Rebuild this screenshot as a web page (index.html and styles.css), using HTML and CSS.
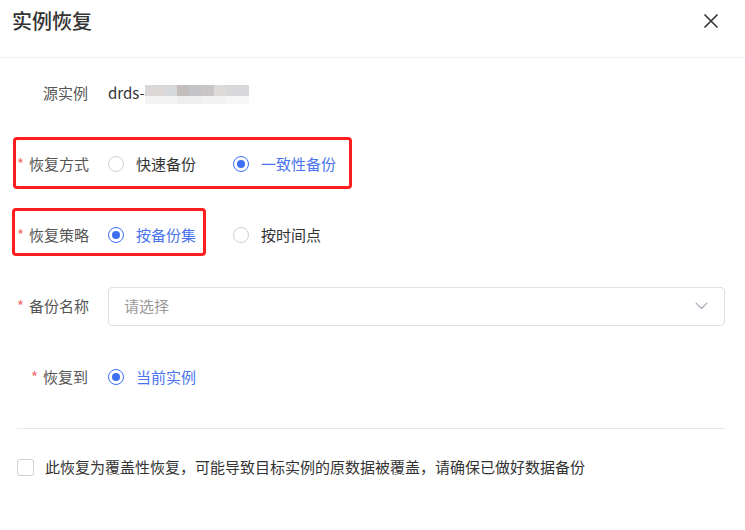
FILE: index.html
```html
<!DOCTYPE html>
<html lang="zh-CN">

<head>
    <meta charset="UTF-8">
    <meta name="viewport" content="width=device-width, initial-scale=1.0">
    <title>实例恢复</title>
    <link rel="stylesheet" href="styles.css">
</head>

<body>
    <div class="dialog">
        <div class="dialog-header">
            <h1 class="dialog-title">实例恢复</h1>
            <span class="close-btn">
                <svg width="16" height="16" viewBox="0 0 16 16">
                    <path d="M1.5 1.5 L14.5 14.5 M14.5 1.5 L1.5 14.5" stroke="#333" stroke-width="1.6" fill="none"/>
                </svg>
            </span>
        </div>

        <div class="dialog-body">
            <div class="form-row">
                <label class="form-label">源实例</label>
                <div class="form-content">
                    <span class="value-text">drds-</span><span class="mask"></span>
                </div>
            </div>

            <div class="form-row">
                <span class="mark mark-mode"></span>
                <label class="form-label"><i class="req">*</i>恢复方式</label>
                <div class="form-content">
                    <span class="radio-item"><span class="radio"></span>快速备份</span>
                    <span class="radio-item checked"><span class="radio"></span>一致性备份</span>
                </div>
            </div>

            <div class="form-row">
                <span class="mark mark-policy"></span>
                <label class="form-label"><i class="req">*</i>恢复策略</label>
                <div class="form-content">
                    <span class="radio-item checked"><span class="radio"></span>按备份集</span>
                    <span class="radio-item"><span class="radio"></span>按时间点</span>
                </div>
            </div>

            <div class="form-row">
                <label class="form-label"><i class="req">*</i>备份名称</label>
                <div class="form-content">
                    <div class="select">
                        <span class="placeholder">请选择</span>
                        <svg width="13" height="8" viewBox="0 0 13 8">
                            <path d="M0.8 0.8 L6.5 6.5 L12.2 0.8" stroke="#a0a4ad" stroke-width="1.1" fill="none"/>
                        </svg>
                    </div>
                </div>
            </div>

            <div class="form-row">
                <label class="form-label"><i class="req">*</i>恢复到</label>
                <div class="form-content">
                    <span class="radio-item checked"><span class="radio"></span>当前实例</span>
                </div>
            </div>

            <div class="divider"></div>

            <div class="confirm">
                <span class="checkbox"></span>
                <span>此恢复为覆盖性恢复，可能导致目标实例的原数据被覆盖，请确保已做好数据备份</span>
            </div>
        </div>
    </div>
</body>

</html>
```

FILE: styles.css
```css
body {
    margin: 0;
    background-color: #fff;
    font-family: "Noto Sans CJK SC", "Liberation Sans", sans-serif;
    color: #333;
}

.dialog {
    width: 745px;
}

.dialog-header {
    height: 57px;
    border-bottom: 1px solid #f0f0f2;
    display: flex;
    align-items: center;
    justify-content: space-between;
    padding: 0 26px 0 12px;
}

.dialog-title {
    margin: 0;
    font-size: 20px;
    font-weight: 500;
    color: #333;
    line-height: 1;
    margin-top: -15px;
}

.close-btn {
    display: flex;
    margin-top: -15px;
}

.dialog-body {
    padding: 15px 20px 0 17px;
}

.form-row {
    position: relative;
    display: flex;
    align-items: center;
    height: 40px;
    margin-bottom: 31px;
    font-size: 15px;
    line-height: 20px;
}

.form-label {
    width: 71px;
    flex-shrink: 0;
    text-align: right;
    white-space: nowrap;
    color: #555;
    margin-right: 20px;
}

.req {
    font-style: normal;
    color: #f56c6c;
    margin-right: 5px;
}

.form-content {
    flex: 1;
    display: flex;
    align-items: center;
}

.value-text {
    color: #333;
}

.mask {
    display: inline-block;
    width: 104px;
    height: 19px;
    margin-top: 3px;
    background:
        linear-gradient(to right, #dcd8d8 0 20px, #d6d8dc 20px 32px, #c4bebc 32px 44px, #c4c4c8 44px 56px, #c8c6c6 56px 69px, #dedada 69px 81px, #d8d8da 81px) top / 100% 11px no-repeat,
        linear-gradient(to right, #f4f4f4 0 32px, #eeeeee 32px 56px, #f2f2f2 56px 81px, #f6f6f6 81px) bottom / 100% 8px no-repeat;
}

.radio-item {
    display: inline-flex;
    align-items: center;
    color: #333;
    margin-right: 37px;
}

.radio {
    width: 16px;
    height: 16px;
    box-sizing: border-box;
    border: 1px solid #cfd1d6;
    border-radius: 50%;
    margin-right: 12px;
    display: inline-flex;
    align-items: center;
    justify-content: center;
}

.radio-item.checked {
    color: #4a74ee;
}

.radio-item.checked .radio {
    border: 1.5px solid #3d6ef3;
}

.radio-item.checked .radio::after {
    content: "";
    width: 8px;
    height: 8px;
    border-radius: 50%;
    background-color: #3d6ef3;
}

.mark {
    position: absolute;
    border: 3px solid #ff1d1d;
    border-radius: 4px;
    box-sizing: border-box;
}

.mark-mode {
    left: -4px;
    top: -7px;
    width: 339px;
    height: 52px;
}

.mark-policy {
    left: -5px;
    top: -7px;
    width: 194px;
    height: 48px;
}

.select {
    flex: 1;
    height: 39px;
    box-sizing: border-box;
    border: 1px solid #dcdfe6;
    border-radius: 4px;
    display: flex;
    align-items: center;
    justify-content: space-between;
    padding: 0 16px 0 15px;
}

.placeholder {
    color: #999;
}

.divider {
    height: 1px;
    background-color: #e6e6ec;
}

.confirm {
    display: flex;
    align-items: center;
    margin-top: 28px;
    font-size: 15px;
    line-height: 20px;
    color: #333;
}

.checkbox {
    width: 17px;
    height: 17px;
    box-sizing: border-box;
    border: 1px solid #d0d0d4;
    border-radius: 3px;
    margin-right: 11px;
}
```
